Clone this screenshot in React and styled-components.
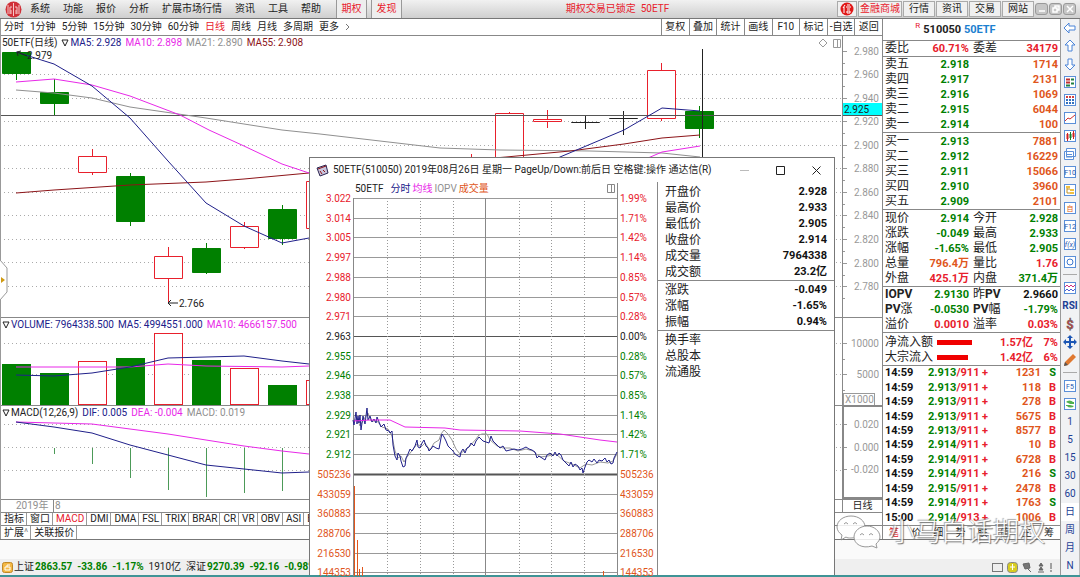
import React from "react";
import styled, { createGlobalStyle } from "styled-components";

const GlobalStyle = createGlobalStyle`
  * {
    box-sizing: border-box;
  }
  body {
    margin: 0;
    background: #fff;
    color: #222;
    font-family: Roboto, "Noto Sans CJK SC", sans-serif;
    font-size: 10px;
    line-height: 12px;
    overflow: hidden;
  }
  button {
    font: inherit;
    color: inherit;
    background: none;
    border: none;
    padding: 0;
    margin: 0;
    white-space: nowrap;
    cursor: pointer;
  }
  svg {
    display: block;
  }
`;

const green = "#008000";
const red = "#e8202c";
const navy = "#20208a";
const magenta = "#e828e8";
const orange = "#e0561c";
const gray = "#909090";
const brown = "#8c1418";

// page frame
const Page = styled.div`
  display: flex;
  flex-direction: column;
  height: 100vh;
  border-bottom: 2px solid #3f9496;
`;

const MenuBar = styled.header`
  position: relative;
  display: flex;
  align-items: center;
  flex: 0 0 19px;
  padding-left: 5px;
  background: linear-gradient(#f1f1f1, #cfcfcf);
  border-bottom: 1px solid #777;
`;

const Menus = styled.nav`
  display: flex;
  gap: 13px;
  margin: 0 15px 0 8px;
`;

const MenuTab = styled.button`
  height: 18px;
  width: 31px;
  margin-right: 4px;
  color: ${red};
  background: #eee;
  border-left: 1px solid #999;
  border-right: 1px solid #999;
`;

const LockTitle = styled.div`
  flex: 1;
  text-align: center;
  color: ${red};
  padding-right: 8px;
`;

const TopButtons = styled.div`
  display: flex;
  align-items: center;
  gap: 1px;
  margin-right: 4px;
`;

const TopButton = styled.button`
  width: ${(p) => (p.$wide ? "44px" : "32px")};
  height: 16px;
  color: ${(p) => (p.$hot ? red : "#222")};
  background: #f0f0f0;
  border: 1px solid #aaa;
`;

const LogoButton = styled(TopButton)`
  display: flex;
  align-items: center;
  justify-content: center;
  width: 20px;
`;

const WinButton = styled.button`
  width: 13px;
  height: 12px;
  border: 1px solid #999;
  border-radius: 3px;
  background: #c6c6c6;
  display: flex;
  align-items: center;
  justify-content: center;
`;

const Body = styled.div`
  display: flex;
  flex: 1;
  min-height: 0;
`;

const Main = styled.main`
  position: relative;
  display: flex;
  flex-direction: column;
  flex: 1;
  min-width: 0;
`;

const Upper = styled.div`
  display: flex;
  flex: 1;
  min-height: 0;
  border-bottom: 1px solid #777;
`;

const Charts = styled.section`
  position: relative;
  display: flex;
  flex-direction: column;
  flex: 1;
  min-width: 0;
  border-left: 1px solid #999;
`;

// period toolbar
const Toolbar = styled.div`
  display: flex;
  flex: 0 0 17px;
  align-items: center;
  border-bottom: 1px solid #888;
  padding-left: 3px;
`;

const Periods = styled.div`
  display: flex;
  flex: 1;
  gap: 6px;
`;

const Period = styled.button`
  color: ${(p) => (p.$active ? red : "#222")};
`;

const Tools = styled.div`
  display: flex;
  flex: 0 0 221px;
  align-self: stretch;
`;

const Tool = styled.button`
  flex: 1;
  border-left: 1px solid #888;
`;

// chart panes
const Pane = styled.div`
  display: flex;
  flex: ${(p) => (p.$grow ? "1" : `0 0 ${p.$height}px`)};
  min-height: 0;
  border-bottom: 1px solid #888;
`;

const Plot = styled.div`
  display: flex;
  flex-direction: column;
  flex: 1;
  min-width: 0;
`;

const Legend = styled.div`
  display: flex;
  flex: 0 0 13px;
  align-items: center;
  gap: 4px;
  white-space: nowrap;
  padding-left: 1px;
`;

const Tint = styled.span`
  color: ${(p) => p.$c};
`;

const Toggle = styled.span`
  display: inline-flex;
  align-items: center;
  gap: 1px;
  color: ${(p) => p.$c || "inherit"};
`;

const LegendTools = styled.span`
  display: flex;
  margin-left: auto;
`;

const PlotSvg = styled.svg`
  flex: 1;
  width: 100%;
  min-height: 0;
  overflow: hidden;
`;

const Axis = styled.div`
  flex: 0 0 40px;
  border-left: 1px solid #888;
`;

const AxisSvg = styled.svg`
  width: 100%;
  height: 100%;
  font-size: 10px;
`;

const BoxedAxis = styled(Axis)`
  border: 2px solid #888;
  border-width: 1px 0 2px 2px;
`;

const DateRow = styled.div`
  display: flex;
  flex: 0 0 13px;
  color: ${gray};
  border-bottom: 1px solid #888;
`;

const Year = styled.span`
  width: 52px;
  padding-left: 15px;
`;

const Month = styled.span`
  flex: 1;
  border-left: 1px solid #888;
  padding-left: 1px;
`;

const DateMode = styled.span`
  flex: 0 0 40px;
  color: #222;
  text-align: center;
  border-left: 1px solid #888;
`;

const TabRow = styled.div`
  display: flex;
  flex: 0 0 13px;
  border-bottom: ${(p) => (p.$last ? "none" : "1px solid #888")};
`;

const Tab = styled.button`
  padding: 0 2px 0 3px;
  color: ${(p) => (p.$active ? red : "#222")};
  border-right: 1px solid #999;
`;

const Expander = styled.div`
  position: absolute;
  left: -1px;
  top: 240px;
`;

const Gap = styled.div`
  flex: 0 0 19px;
  background: #fafafa;
`;

const StatusBar = styled.footer`
  display: flex;
  flex: 0 0 16px;
  align-items: center;
  gap: 5px;
  padding: 0 7px 0 2px;
  background: #efefef;
  white-space: nowrap;
`;

const IndexName = styled.span`
  display: inline-flex;
  align-items: center;
  gap: 1px;
`;

const Down = styled.b`
  color: ${green};
`;

const StatusIcons = styled.span`
  display: flex;
  gap: 4px;
  margin-left: auto;
`;

// quote panel
const Quote = styled.aside`
  display: flex;
  flex-direction: column;
  flex: 0 0 178px;
  border-left: 1px solid #888;
`;

const QuoteTitle = styled.h1`
  flex: 0 0 21px;
  margin: 0;
  border-bottom: 1px solid #888;
  font-size: 11px;
  line-height: 21px;
  text-align: center;
  padding-right: 32px;
`;

const Sup = styled.sup`
  color: ${red};
  font-size: 8px;
  font-weight: 400;
  line-height: 8px;
  margin-right: 3px;
`;

const QuoteTable = styled.table`
  table-layout: fixed;
  width: 100%;
  border-collapse: collapse;
  border-bottom: 1px solid #888;
  font-size: 11px;
  font-weight: 700;
`;

const Label = styled.th`
  width: ${(p) => p.$w || 28}px;
  height: 15px;
  padding: 0 0 0 2px;
  font-size: 12px;
  font-weight: 400;
  line-height: 15px;
  text-align: left;
  white-space: nowrap;
`;

const Num = styled.td`
  width: ${(p) => (p.$w ? `${p.$w}px` : "auto")};
  height: 15px;
  padding: 0 2px 0 0;
  line-height: 15px;
  text-align: right;
  white-space: nowrap;
  color: ${(p) => p.$c || "#111"};
`;

const Spaced = styled.div`
  padding-top: ${(p) => p.$top}px;
`;

const FlowBar = styled.div`
  height: 5px;
  background: #f00000;
`;

const TickTable = styled.table`
  table-layout: fixed;
  width: 100%;
  height: 100%;
  border-collapse: collapse;
  font-size: 11px;
  font-weight: 700;
`;

const TickCell = styled.td`
  padding: 0 ${(p) => (p.$last ? 4 : 1)}px 0 2px;
  line-height: 14px;
  width: ${(p) => p.$w}px;
  text-align: ${(p) => p.$align || "left"};
  color: ${(p) => p.$c || "#111"};
  white-space: nowrap;
`;

const TickWrap = styled.div`
  flex: 1;
  min-height: 0;
`;

const QuoteTabs = styled.div`
  display: flex;
  flex: 0 0 14px;
  border-top: 1px solid #888;
`;

const QuoteTab = styled.button`
  flex: 1;
  color: ${(p) => (p.$active ? red : "#222")};
`;

// right icon rail
const Rail = styled.nav`
  display: flex;
  flex-direction: column;
  flex: 0 0 20px;
  background: #f1f2f4;
  border-left: 1px solid #999;
  border-right: 1px solid #bbb;
`;

const RailButton = styled.button`
  display: flex;
  align-items: center;
  justify-content: center;
  height: 18px;
  color: #1c3f94;
  background: ${(p) => (p.$active ? "#fff" : "none")};
`;

const RailRule = styled.hr`
  width: 14px;
  height: 1px;
  margin: 3px auto 4px;
  border: none;
  background: #aaa;
`;

// intraday window
const Dialog = styled.section`
  position: absolute;
  left: 309px;
  top: 138px;
  bottom: 0;
  width: 526px;
  display: flex;
  flex-direction: column;
  background: #fff;
  border: 1px solid #777;
  border-bottom: none;
`;

const DialogBar = styled.header`
  display: flex;
  flex: 0 0 24px;
  align-items: center;
  padding: 0 13px 0 6px;
`;

const DialogTitle = styled.h2`
  flex: 1;
  margin: 0 0 0 4px;
  font-size: 10px;
  font-weight: 400;
  white-space: nowrap;
`;

const DialogControls = styled.div`
  display: flex;
  gap: 27px;
`;

const DialogBody = styled.div`
  display: flex;
  flex: 1;
  min-height: 0;
`;

const Intraday = styled.div`
  display: flex;
  flex-direction: column;
  flex: 1;
  min-width: 0;
`;

const IntradayLegend = styled.div`
  display: flex;
  flex: 0 0 14px;
  align-items: center;
  gap: 2px;
  padding: 0 41px 0 45px;
`;

const LegendName = styled.span`
  margin-right: 5px;
`;

const IntradaySvg = styled.svg`
  flex: 1;
  width: 100%;
  min-height: 0;
  overflow: visible;
  font-size: 10px;
`;

const Summary = styled.div`
  flex: 0 0 177px;
  border-left: 1px solid #888;
`;

const SummaryTable = styled.table`
  width: 100%;
  margin-top: 2px;
  border-collapse: collapse;
  font-size: 12px;
  line-height: 16px;

  tbody + tbody {
    border-top: 1px solid #888;
  }
  tbody + tbody tr:first-child > * {
    padding-top: 1px;
  }
  th {
    height: 16px;
    padding: 0 0 0 7px;
    font-weight: 400;
    text-align: left;
  }
  td {
    padding: 0 7px 0 0;
    font-size: 11px;
    font-weight: 700;
    text-align: right;
    color: #111;
  }
`;

const Watermark = styled.div`
  position: absolute;
  right: 15px;
  bottom: 26px;
  display: flex;
  align-items: center;
  gap: 7px;
  color: #fff;
  opacity: 0.85;
  font-size: 26px;
  font-weight: 300;
  line-height: 34px;
  text-shadow: 1px 1px 1px #555, -1px -1px 1px #999;
  pointer-events: none;
`;

// ---- data ----

const menus = ["系统", "功能", "报价", "分析", "扩展市场行情", "资讯", "工具", "帮助"];
const periods = ["分时", "1分钟", "5分钟", "15分钟", "30分钟", "60分钟", "日线", "周线", "月线", "多周期", "更多"];
const tools = ["复权", "叠加", "统计", "画线", "F10", "标记", "-自选", "返回"];
const indicators = ["指标", "窗口", "MACD", "DMI", "DMA", "FSL", "TRIX", "BRAR", "CR", "VR", "OBV", "ASI", "EMV"];

// slot, high, top, bottom, low, colour
const candles = [
  [0, 52, 52, 73, 80, "g"],
  [1, 79, 92, 103, 115, "g"],
  [2, 149, 156, 172, 175, "r"],
  [3, 173, 176, 221, 226, "g"],
  [4, 247, 256, 278, 303, "r"],
  [5, 243, 248, 272, 274, "g"],
  [6, 222, 226, 247, 249, "r"],
  [7, 205, 209, 238, 245, "g"],
  [8, 170, 181, 228, 235, "r"],
  [12, 154, 165, 190, 200, "r"],
  [13, 112, 113, 157, 157, "r"],
  [14, 110, 119, 121, 128, "r"],
  [15, 115, 122, 122, 129, "k"],
  [16, 111, 118, 118, 135, "k"],
  [17, 63, 70, 118, 121, "r"],
  [18, 106, 111, 128, 138, "g"],
];

// slot, top, colour
const volumes = [
  [0, 364, "g"],
  [1, 373, "g"],
  [2, 361, "r"],
  [3, 358, "g"],
  [4, 333, "r"],
  [5, 360, "g"],
  [6, 368, "r"],
  [7, 385, "g"],
  [8, 380, "r"],
];

const macdBars = [[1, 454], [2, 464], [3, 478], [4, 490], [5, 497], [6, 493], [7, 491]];

const priceAxis = [
  ["2.980", 51], ["2.960", 74], ["2.940", 98], ["2.920", 121], ["2.900", 145], ["2.880", 168],
  ["2.860", 192], ["2.840", 215], ["2.820", 239], ["2.800", 263], ["2.780", 286],
];

const asks = [["卖五", "2.918", "1714"], ["卖四", "2.917", "2131"], ["卖三", "2.916", "1069"], ["卖二", "2.915", "6044"], ["卖一", "2.914", "100"]];
const bids = [["买一", "2.913", "7881"], ["买二", "2.912", "16229"], ["买三", "2.911", "15066"], ["买四", "2.910", "3960"], ["买五", "2.909", "2101"]];

const stats = [
  ["现价", "2.914", green, "今开", "2.928", green],
  ["涨跌", "-0.049", green, "最高", "2.933", green],
  ["涨幅", "-1.65%", green, "最低", "2.905", green],
  ["总量", "796.4万", orange, "量比", "1.76", red],
  ["外盘", "425.1万", red, "内盘", "371.4万", green],
];
const iopv = [
  [<b>IOPV</b>, "2.9130", green, <>昨<b>PV</b></>, "2.9660", "#111"],
  [<><b>PV</b>涨</>, "-0.0530", green, <><b>PV</b>幅</>, "-1.79%", green],
  ["溢价", "0.0010", red, "溢率", "0.03%", red],
];

const flows = [["净流入额", 35, "1.57亿", "7%"], ["大宗流入", 31, "1.42亿", "6%"]];

const ticks = [
  ["14:59", "2.913", "/911", "1231", "S"],
  ["14:59", "2.913", "/911", "118", "B"],
  ["14:59", "2.913", "/911", "278", "B"],
  ["14:59", "2.913", "/911", "5675", "B"],
  ["14:59", "2.913", "/911", "8577", "B"],
  ["14:59", "2.914", "/911", "10", "B"],
  ["14:59", "2.914", "/911", "6728", "B"],
  ["14:59", "2.914", "/911", "216", "S"],
  ["14:59", "2.915", "/911", "2478", "B"],
  ["14:59", "2.914", "/911", "1763", "S"],
  ["15:00", "2.914", "/913", "1006", "B"],
];

const intradayRows = [
  ["3.022", "1.99%"], ["3.014", "1.71%"], ["3.005", "1.42%"], ["2.997", "1.14%"], ["2.988", "0.85%"],
  ["2.980", "0.57%"], ["2.971", "0.28%"], ["2.963", "0.00%"], ["2.955", "0.28%"], ["2.946", "0.57%"],
  ["2.938", "0.85%"], ["2.929", "1.14%"], ["2.921", "1.42%"], ["2.912", "1.71%"], ["505236", "505236"],
  ["433059", "433059"], ["360883", "360883"], ["288706", "288706"], ["216530", "216530"], ["144353", "144353"],
];

const priceLine =
  "353,420 354,425 356,412 357,424 358,416 359,423 360,415 361,430 363,416 365,424 367,408 368,420 370,416 372,422 374,419 376,423 377,417 379,422 381,427 384,424 386,430 389,431 390,433 392,431 393,445 395,456 397,460 398,453 400,456 401,461 403,467 405,466 406,458 408,454 410,449 412,451 415,446 417,440 418,447 420,448 422,443 424,440 426,446 428,448 429,451 431,449 433,446 436,448 439,449 441,438 442,434 444,437 446,441 448,446 450,448 453,451 455,454 458,456 460,457 461,452 463,449 465,453 467,448 469,447 471,443 474,446 476,441 479,437 483,441 486,442 489,443 491,436 493,441 496,444 500,448 503,446 506,451 510,450 514,449 518,450 522,449 526,447 529,449 532,450 535,452 537,458 539,456 542,458 545,460 547,455 550,453 553,456 555,452 557,456 559,453 561,455 563,460 567,464 569,466 571,462 573,467 575,464 578,466 580,470 582,468 583,473 585,467 587,462 589,460 592,462 594,459 597,463 599,460 602,461 605,458 607,462 609,460 611,464 613,463 614,458 617,452";
const iopvLine =
  "354,422 357,418 360,426 364,419 368,413 371,421 377,421 382,427 388,429 392,436 395,451 398,458 401,456 404,462 407,457 411,452 417,444 421,447 425,443 430,450 434,443 439,440 441,434 444,430 448,434 452,440 456,449 460,454 465,450 470,446 476,439 479,435 482,434 487,434 490,440 497,446 503,448 510,448 518,451 526,449 533,451 540,457 548,456 556,454 564,461 572,464 580,468 586,464 592,465 600,462 608,463 613,461 617,454";

const slotX = (i) => Math.round(16 + i * 37.95);
const tone = { g: green, r: red, k: "#222" };

const Dotted = ({ ys }) =>
  ys.map((y) => <line key={y} x1="0" x2="100%" y1={y + 0.5} y2={y + 0.5} stroke="#aaa" strokeDasharray="1 3" />);

const Marker = () => (
  <svg width="8" height="8" viewBox="0 0 8 8">
    <path d="M1 1h6L4 7z" fill="none" stroke="#222" />
  </svg>
);

const Candle = ({ i, high, top, bottom, low, c }) => {
  const x = slotX(i);
  return (
    <g stroke={tone[c]} fill={c === "g" ? green : "#fff"}>
      <line x1={x + 0.5} x2={x + 0.5} y1={high} y2={low} />
      <path d={`M${x - 13.5} ${top + 0.5}h28v${bottom - top}h-28z`} />
    </g>
  );
};

function KPane() {
  return (
    <Pane $grow>
      <Plot>
        <Legend>
          <span>50ETF(日线)</span>
          <Toggle $c={navy}><Marker />MA5: 2.928</Toggle>
          <Tint $c={magenta}>MA10: 2.898</Tint>
          <Tint $c={gray}>MA21: 2.890</Tint>
          <Tint $c={brown}>MA55: 2.908</Tint>
          <LegendTools>
            <svg width="24" height="12" fill="none" stroke="#999">
              <path d="M5 2l4 4-4 4-4-4zM15.500 2.500h7v8h-7zM19.500 2v8" />
            </svg>
          </LegendTools>
        </Legend>
        <PlotSvg>
          <g transform="translate(-1 -49)" fill="none">
            <Dotted ys={[74, 98, 121, 145, 168, 192, 215, 239, 262, 286]} />
            {candles.map(([i, high, top, bottom, low, c]) => (
              <Candle key={i} i={i} high={high} top={top} bottom={bottom} low={low} c={c} />
            ))}
            <line x1="0" x2="100%" y1="115.500" y2="115.500" stroke="#555" />
            <line x1="702.500" x2="702.500" y1="48" y2="170" stroke="#222" />
            <polyline stroke={gray} points="16,90 54,93 92,98 130,107 206,118 282,130 320,134 440,148 500,150 590,151 662,153 700,157" />
            <polyline stroke={brown} points="16,193 54,190 130,185 206,182 244,179 309,173 400,166 506,157 570,151 624,144 662,138 700,135" />
            <polyline stroke={magenta} points="16,82 54,79 92,85 130,96 180,115 209,130 244,146 282,164 309,173 500,190 648,158 662,152 700,146" />
            <polyline stroke={navy} points="16,52 54,64 92,86 130,118 168,161 206,203 244,226 282,243 309,238 450,220 560,157 624,130 662,108 700,111" />
            <path d="M17 52l10 4M17 52l4-1M17 52l1 4M178 303h-10M168 303l3-3M168 303l3 3" stroke="#222" />
            <g fill="#222" fontSize="10">
              <text x="27" y="59">2.979</text>
              <text x="179" y="307">2.766</text>
            </g>
          </g>
        </PlotSvg>
      </Plot>
      <Axis>
        <AxisSvg>
          <g transform="translate(0 -36)" fill="#999">
            {priceAxis.map(([label, y]) => (
              <g key={label}>
                <path d={`M0 ${y + 0.5}h4M0 ${y + 12.5}h2`} stroke="#999" />
                <text x="36" y={y + 4} textAnchor="end">{label}</text>
              </g>
            ))}
            <rect y="103" width="40" height="12" fill="#0ff" />
            <line x2="40" y1="115.500" y2="115.500" stroke="#555" />
            <text x="1" y="113" fill="#222">2.925</text>
          </g>
        </AxisSvg>
      </Axis>
    </Pane>
  );
}

function VolumePane() {
  return (
    <Pane $height={88}>
      <Plot>
        <Legend>
          <Toggle $c={navy}><Marker />VOLUME: 7964338.500</Toggle>
          <Tint $c={navy}>MA5: 4994551.000</Tint>
          <Tint $c={magenta}>MA10: 4666157.500</Tint>
        </Legend>
        <PlotSvg>
          <g transform="translate(-1 -331)" fill="none">
            <Dotted ys={[343, 374]} />
            {volumes.map(([i, top, c]) => (
              <rect key={i} x={slotX(i) - 13.5} y={top + 0.5} width="28" height={404 - top} stroke={tone[c]} fill={c === "g" ? green : "#fff"} />
            ))}
            <polyline stroke={magenta} points="16,367 130,367 168,364 206,366 282,367 309,366" />
            <polyline stroke={navy} points="16,375 54,376 92,373 130,367 168,358 206,357 244,356 282,361 309,364" />
          </g>
        </PlotSvg>
      </Plot>
      <Axis>
        <AxisSvg>
          <g transform="translate(0 -318)" fill="#999">
            <path d="M0 343.500h4M0 359.500h2M0 374.500h4M0 390.500h2" stroke="#999" />
            <text x="36" y="347" textAnchor="end">10000</text>
            <text x="36" y="378" textAnchor="end">5000</text>
            <rect x="0.500" y="393.500" width="31" height="13" fill="#fff" stroke="#999" />
            <text x="2" y="403">X1000</text>
          </g>
        </AxisSvg>
      </Axis>
    </Pane>
  );
}

function MacdPane() {
  return (
    <Pane $height={94}>
      <Plot>
        <Legend>
          <Toggle><Marker />MACD(12,26,9)</Toggle>
          <Tint $c={navy}>DIF: 0.005</Tint>
          <Tint $c={magenta}>DEA: -0.004</Tint>
          <Tint $c={gray}>MACD: 0.019</Tint>
        </Legend>
        <PlotSvg>
          <g transform="translate(-1 -419)" fill="none">
            <Dotted ys={[424, 447, 470]} />
            {macdBars.map(([i, y]) => (
              <line key={i} x1={slotX(i) + 0.5} x2={slotX(i) + 0.5} y1="448" y2={y} stroke="#4c9a58" />
            ))}
            <polyline stroke={magenta} points="16,422 54,423 92,424 130,429 168,434 206,440 244,446 282,451 309,454" />
            <polyline stroke={navy} points="16,422 54,427 92,433 130,445 168,455 206,465 244,469 282,473 309,472" />
          </g>
        </PlotSvg>
      </Plot>
      <BoxedAxis>
        <AxisSvg>
          <g transform="translate(0 -407)" fill="#999">
            <path d="M0 424.500h3M0 447.500h3M0 469.500h3" stroke="#999" />
            <text x="35" y="428" textAnchor="end">0.020</text>
            <text x="35" y="451" textAnchor="end">0.000</text>
            <text x="35" y="473" textAnchor="end">-0.020</text>
          </g>
        </AxisSvg>
      </BoxedAxis>
    </Pane>
  );
}

function IntradayDialog() {
  const rowY = (i) => Math.round(198 + i * 19.7);
  const rowColor = (i) => (i < 7 ? red : i === 7 ? "#222" : i < 14 ? green : orange);
  return (
    <Dialog role="dialog" aria-label="50ETF">
      <DialogBar>
        <svg width="13" height="13" viewBox="0 0 13 13">
          <path d="M1 4l9-3 2 8-8 3z" fill="#c9c4dc" stroke="#2a2350" />
          <path d="M2 5l8-3M4 7l2 3M7 6l2 2" stroke="#8c1418" />
        </svg>
        <DialogTitle>50ETF(510050) 2019年08月26日 星期一 PageUp/Down:前后日 空格键:操作 通达信(R)</DialogTitle>
        <DialogControls>
          <button aria-label="最小化">
            <svg width="9" height="9"><path d="M0 4.500h9" stroke="#bbb" /></svg>
          </button>
          <button aria-label="最大化">
            <svg width="9" height="9"><path d="M.5.5h8v8h-8z" fill="none" stroke="#222" /></svg>
          </button>
          <button aria-label="关闭">
            <svg width="9" height="9"><path d="M.5.5l8 8M8.500.5l-8 8" stroke="#222" /></svg>
          </button>
        </DialogControls>
      </DialogBar>
      <DialogBody>
        <Intraday>
          <IntradayLegend>
            <LegendName>50ETF</LegendName>
            <Tint $c={navy}>分时</Tint>
            <Tint $c={magenta}>均线</Tint>
            <Tint $c={gray}>IOPV</Tint>
            <Tint $c={orange}>成交量</Tint>
            <LegendTools>
              <svg width="9" height="10" fill="none" stroke="#888">
                <path d="M.5.5h7v8h-7zM4.500 0v8" />
              </svg>
            </LegendTools>
          </IntradayLegend>
          <IntradaySvg>
            <g transform="translate(-310 -196)" fill="none">
              {intradayRows.map(([left, right], i) => (
                <g key={i}>
                  <line x1="353" x2="617" y1={rowY(i) + 0.5} y2={rowY(i) + 0.5} stroke={i === 7 || i === 14 ? "#555" : "#999"} strokeWidth={i === 14 ? 2 : 1} />
                  <text x="351" y={rowY(i) + 4} textAnchor="end" fill={rowColor(i)}>{left}</text>
                  <text x="620" y={rowY(i) + 4} fill={rowColor(i)}>{right}</text>
                </g>
              ))}
              {[387, 420, 453, 519, 551, 584].map((x) => (
                <line key={x} x1={x + 0.5} x2={x + 0.5} y1="198" y2="576" stroke="#999" strokeDasharray="1 2" />
              ))}
              <path d="M353.500 198v378M485.500 198v378M617.500 183v393" stroke="#888" />
              <polyline stroke="#999" points={iopvLine} />
              <polyline stroke={navy} points={priceLine} />
              <polyline stroke={magenta} points="354,421 370,420 390,420 405,427 445,428 460,430 520,431 560,434 600,440 617,442" />
              <path d="M354.500 486v90M357.500 540v36M359.500 569v7M362.500 567v9M603.500 571v5" stroke={orange} />
            </g>
          </IntradaySvg>
        </Intraday>
        <Summary>
          <SummaryTable>
            <tbody>
              {[["开盘价", "2.928"], ["最高价", "2.933"], ["最低价", "2.905"], ["收盘价", "2.914"], ["成交量", "7964338"], ["成交额", "23.2亿"]].map(([k, v]) => (
                <tr key={k}><th scope="row">{k}</th><td>{v}</td></tr>
              ))}
            </tbody>
            <tbody>
              {[["涨跌", "-0.049"], ["涨幅", "-1.65%"], ["振幅", "0.94%"]].map(([k, v]) => (
                <tr key={k}><th scope="row">{k}</th><td>{v}</td></tr>
              ))}
            </tbody>
            <tbody>
              {["换手率", "总股本", "流通股"].map((k) => (
                <tr key={k}><th scope="row">{k}</th><td /></tr>
              ))}
            </tbody>
          </SummaryTable>
        </Summary>
      </DialogBody>
    </Dialog>
  );
}

const StatRows = ({ rows }) => (
  <QuoteTable>
    <tbody>
      {rows.map(([a, av, ac, b, bv, bc]) => (
        <tr key={av}>
          <Label scope="row">{a}</Label>
          <Num $w={60} $c={ac}>{av}</Num>
          <Label scope="row">{b}</Label>
          <Num $c={bc}>{bv}</Num>
        </tr>
      ))}
    </tbody>
  </QuoteTable>
);

const BookRows = ({ rows }) => (
  <QuoteTable>
    <tbody>
      {rows.map(([name, price, vol]) => (
        <tr key={name}>
          <Label scope="row">{name}</Label>
          <Num $w={60} $c={green}>{price}</Num>
          <Num $c={orange}>{vol}</Num>
        </tr>
      ))}
    </tbody>
  </QuoteTable>
);

function QuotePanel() {
  return (
    <Quote>
      <QuoteTitle>
        <Sup>R</Sup>510050 <Tint $c="#1c7fd0">50ETF</Tint>
      </QuoteTitle>
      <StatRows rows={[["委比", "60.71%", red, "委差", "34179", red]]} />
      <BookRows rows={asks} />
      <Spaced $top={1}>
        <BookRows rows={bids} />
      </Spaced>
      <Spaced $top={1}>
        <StatRows rows={stats} />
      </Spaced>
      <StatRows rows={iopv} />
      <Spaced $top={2}>
        <QuoteTable>
          <tbody>
            {flows.map(([name, w, amount, pct]) => (
              <tr key={name}>
                <Label scope="row" $w={54}>{name}</Label>
                <Num $w={38}><FlowBar style={{ width: w }} /></Num>
                <Num $w={60} $c={red}>{amount}</Num>
                <Num $c={red}>{pct}</Num>
              </tr>
            ))}
          </tbody>
        </QuoteTable>
      </Spaced>
      <TickWrap>
        <TickTable>
          <tbody>
            {ticks.map(([time, price, ref, vol, side], i) => (
              <tr key={i}>
                <TickCell $w={43}>{time}</TickCell>
                <TickCell $w={54} $c={green}>{price}<Tint $c={red}>{ref}</Tint></TickCell>
                <TickCell $w={12} $c={red}>+</TickCell>
                <TickCell $w={50} $c={orange} $align="right">{vol}</TickCell>
                <TickCell $w={18} $c={side === "B" ? red : green} $align="right" $last>{side}</TickCell>
              </tr>
            ))}
          </tbody>
        </TickTable>
      </TickWrap>
      <QuoteTabs>
        {["笔", "价", "细", "势", "联", "值", "主", "筹"].map((t, i) => (
          <QuoteTab key={t} $active={i === 0}>{t}</QuoteTab>
        ))}
      </QuoteTabs>
    </Quote>
  );
}

const Framed = ({ children }) => (
  <svg width="14" height="14" viewBox="0 0 14 14" fill="none">
    <rect x="1.500" y="1.500" width="11" height="11" fill="#fff" stroke="#5b8fd8" />
    {children}
  </svg>
);

const FramedText = ({ children, fill = "#2456b0" }) => (
  <Framed>
    <text x="7" y="10" fontSize="7" textAnchor="middle" fill={fill}>{children}</text>
  </Framed>
);

const Arrow = ({ turn }) => (
  <svg width="14" height="14" viewBox="0 0 14 14">
    <path transform={`rotate(${turn} 7 7)`} d="M1 7l5-5v3h6v4h-6v3z" fill="#fff" stroke="#4b84d8" />
  </svg>
);

const railTop = [
  ["后退", <Arrow turn={0} />],
  ["向上", <Arrow turn={90} />],
  ["向下", <Arrow turn={-90} />],
  ["报价表", <Framed><path d="M3 4.500h4M3 7.500h4" stroke="#c03030" strokeWidth="2" /><path d="M8 4.500h3M8 8.500h3M3 10.500h4" stroke="#208040" strokeWidth="2" /></Framed>],
  ["列表", <Framed><path d="M3 4h8" stroke="#d04040" strokeWidth="2" strokeDasharray="2 1" /><path d="M3 7h8M3 10h8" stroke="#3070c0" strokeWidth="2" strokeDasharray="2 1" /></Framed>],
  ["分时图", <Framed><path d="M2 10l3-3 2 1 5-4" stroke="#d03030" /></Framed>],
  ["K线图", <Framed><path d="M4.500 5v5M10.500 4v4" stroke="#d02020" strokeWidth="2" /><path d="M7.500 5v4" stroke="#108030" strokeWidth="2" /><path d="M4.500 4v8M10.500 2v8" stroke="#d02020" /><path d="M7.500 3v8" stroke="#108030" /></Framed>],
  ["多窗口", <svg width="14" height="14" fill="#fff" stroke="#5b8fd8"><path d="M3.500 1.500h9v8h-9zM1.500 4.500h9v8h-9zM3 7.500h6M3 10h6" /></svg>],
  ["F10", <FramedText>F10</FramedText>],
  ["板块树", <Framed><path d="M4 3v7h3M4 6h3" stroke="#c09020" /><path d="M3 3h4v2H3zM7 6h4v2H7zM7 9h4v2H7z" fill="#f0c040" /></Framed>],
  ["自选", <FramedText fill="#e06010">自</FramedText>],
  ["F12", <FramedText>F12</FramedText>],
  ["公式", <Framed><text x="7" y="10" fontSize="7" fontStyle="italic" textAnchor="middle" fill="#2456b0">f(x)</text></Framed>],
  ["周期", <Framed><circle cx="7" cy="7" r="3" stroke="#3c78d0" /></Framed>],
];

const railMid = [
  ["指标", <Framed><path d="M2 6l2-2 2 2 2-2 2 2 2-2" stroke="#d03080" /><path d="M2 10l2-2 2 2 2-2 2 2 2-2" stroke="#5060d0" /></Framed>],
  ["RSI", <b>RSI</b>],
  ["资金", <svg width="14" height="14"><text x="7" y="12" fontSize="13" fontWeight="700" textAnchor="middle" fill="#c04040" stroke="#666" strokeWidth="0.500">$</text></svg>],
  ["移动", <svg width="14" height="14" viewBox="0 0 14 14"><path d="M7 0l3 3H8v3h3V4l3 3-3 3V8H8v3h2l-3 3-3-3h2V8H3v2L0 7l3-3v2h3V3H4z" fill="#1c56b4" /></svg>],
  ["画线", <svg width="14" height="14" viewBox="0 0 14 14"><path d="M1 13l1-4 8-8 3 3-8 8z" fill="#e07830" /><path d="M1 13l1-4 3 3z" fill="#555" /></svg>],
];

const railBottom = [
  ["F5", <FramedText>F5</FramedText>],
  ["刷新", <Framed><path d="M3 5a4 3 0 0 1 7 0h1v2H7M11 9a4 3 0 0 1-7 0H3V8h4" fill="#50b050" /></Framed>],
  ["1"], ["5"], ["15"], ["30"], ["60"], ["日"], ["周"], ["月"], ["N"],
];

const RailItems = ({ items }) =>
  items.map(([label, icon]) => (
    <RailButton key={label} aria-label={label} $active={label === "日"}>
      {icon || label}
    </RailButton>
  ));

function App() {
  return (
    <Page>
      <GlobalStyle />
      <MenuBar>
        <svg width="17" height="17" viewBox="0 0 17 17">
          <circle cx="8.500" cy="8.500" r="8" fill="#d03038" />
          <path d="M3 4v9M5 6h2M5 6v7M8.500 2v13M12 6h-2M12 6v7M14 4v9M6 9v4M11 9v4" stroke="#f6c8c8" fill="none" />
        </svg>
        <Menus>
          {menus.map((m) => <button key={m}>{m}</button>)}
        </Menus>
        <MenuTab>期权</MenuTab>
        <MenuTab>发现</MenuTab>
        <LockTitle>期权交易已锁定&nbsp; 50ETF</LockTitle>
        <TopButtons>
          <LogoButton aria-label="信">
            <svg width="14" height="14" viewBox="0 0 14 14">
              <circle cx="7" cy="7" r="6.500" fill="#e01818" />
              <path d="M5 3L3 6M4 5v6M7 3h3M6 5h5M7 7h3M7 9h3v2H7z" stroke="#fff" fill="none" />
            </svg>
          </LogoButton>
          <TopButton $wide $hot>金融商城</TopButton>
          {["行情", "资讯", "交易", "网站"].map((t) => <TopButton key={t}>{t}</TopButton>)}
          {[["最小化", "M1 6h6"], ["还原", "M1 3h4v4H1zM3 3V1h4v4H5"], ["关闭", "M1 1l6 6M7 1L1 7"]].map(([t, d]) => (
            <WinButton key={t} aria-label={t}>
              <svg width="8" height="8" viewBox="0 0 8 8"><path d={d} fill="none" stroke="#fff" strokeWidth="1.500" /></svg>
            </WinButton>
          ))}
        </TopButtons>
      </MenuBar>

      <Body>
        <Main>
          <Upper>
            <Charts>
              <Toolbar>
                <Periods>
                  {periods.map((p) => <Period key={p} $active={p === "日线"}>{p}</Period>)}
                  <svg width="5" height="12"><path d="M1 3l3 3-3 3" fill="none" stroke="#777" /></svg>
                </Periods>
                <Tools>
                  {tools.map((t) => <Tool key={t}>{t}</Tool>)}
                </Tools>
              </Toolbar>
              <KPane />
              <VolumePane />
              <MacdPane />
              <DateRow>
                <Year>2019年</Year>
                <Month>8</Month>
                <DateMode>日线</DateMode>
              </DateRow>
              <TabRow>
                {indicators.map((t) => <Tab key={t} $active={t === "MACD"}>{t}</Tab>)}
              </TabRow>
              <TabRow $last>
                <Tab>扩展<Tint $c={gray}>^</Tint></Tab>
                <Tab>关联报价</Tab>
              </TabRow>
              <Expander>
                <svg width="8" height="42" viewBox="0 0 8 42">
                  <path d="M0 1l7 8v24l-7 8" fill="#fff" stroke="#999" />
                  <path d="M1 18l4 3-4 3z" fill="#d09a10" />
                </svg>
              </Expander>
            </Charts>
            <QuotePanel />
          </Upper>
          <Gap />
          <StatusBar>
            <IndexName>
              <svg width="11" height="11"><rect x=".5" y=".5" width="10" height="10" rx="2" fill="#f4b844" stroke="#c08828" /><path d="M3 8V5h5v3zM5 5V3h3" stroke="#fff" fill="none" /></svg>
              上证<Down>2863.57</Down>
            </IndexName>
            <Down>-33.86</Down>
            <Down>-1.17%</Down>
            <span>1910亿</span>
            <IndexName>深证<Down>9270.39</Down></IndexName>
            <Down>-92.16</Down>
            <Down>-0.98%</Down>
            <StatusIcons>
              <svg width="11" height="11"><rect x=".5" y="1.500" width="10" height="8" fill="#eee" stroke="#777" /></svg>
              <svg width="11" height="11"><rect x=".5" y=".5" width="10" height="10" rx="3" fill="#d8cc20" stroke="#888" /><path d="M5.500 2v6M3 5h5" stroke="#fff" /></svg>
              <svg width="11" height="11"><path d="M1 2l6-1 1 5-5 1zM6 7l3 3" fill="#777" stroke="#666" /></svg>
              <svg width="8" height="11"><path d="M4 1l2 3H2zM4 5l2 3H2zM1 10h6" fill="#666" stroke="#666" /></svg>
              <svg width="4" height="11"><path d="M2 1v6M2 8v2" stroke="#555" strokeWidth="1" /></svg>
            </StatusIcons>
          </StatusBar>
          <IntradayDialog />
          <Watermark>
            <svg width="46" height="34" viewBox="0 0 46 34" fill="#fff" stroke="#888">
              <path d="M15 1c8 0 14 5 14 11s-6 11-14 11c-2 0-4 0-5-1l-5 3 1-5c-3-2-5-5-5-8 0-6 6-11 14-11z" />
              <path d="M31 11c7 0 13 5 13 11 0 3-2 5-4 7l1 4-5-2c-10 3-18-2-18-9 0-6 6-11 13-11z" />
              <path d="M8 9q2-3 4 0M17 9q2-3 4 0M24 20q2-3 4 0M33 20q2-3 4 0" fill="none" />
            </svg>
            小马白话期权
          </Watermark>
        </Main>
        <Rail>
          <RailItems items={railTop} />
          <RailRule />
          <RailItems items={railMid} />
          <RailRule />
          <RailItems items={railBottom} />
        </Rail>
      </Body>
    </Page>
  );
}

export default App;
